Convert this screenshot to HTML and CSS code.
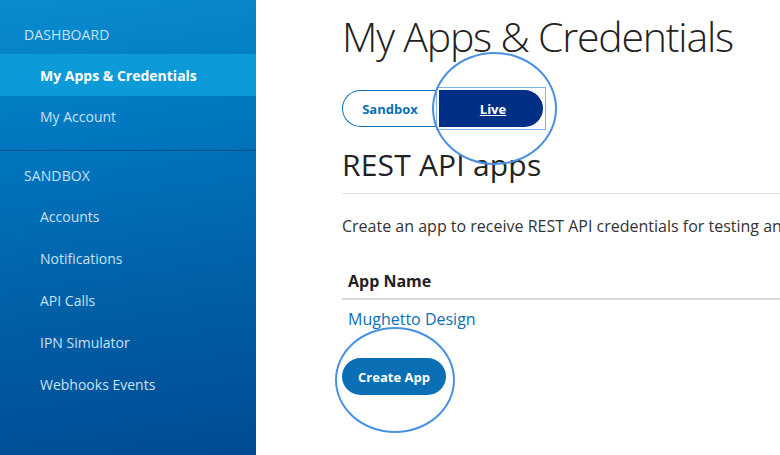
FILE: index.html
```html
<!DOCTYPE html>
<html>
<head>
<meta charset="utf-8">
<link rel="stylesheet" href="styles.css">
</head>
<body>
<aside class="sidebar">
  <div class="group">
    <div class="label">DASHBOARD</div>
    <a class="item active">My Apps &amp; Credentials</a>
    <a class="item">My Account</a>
  </div>
  <div class="group">
    <div class="label label-second">SANDBOX</div>
    <a class="item">Accounts</a>
    <a class="item">Notifications</a>
    <a class="item">API Calls</a>
    <a class="item">IPN Simulator</a>
    <a class="item">Webhooks Events</a>
  </div>
</aside>
<main class="main">
  <h1 class="title">My Apps &amp; Credentials</h1>
  <div class="toggle">
    <button class="tog tog-sandbox">Sandbox</button>
    <span class="focus-wrap"><button class="tog tog-live">Live</button></span>
    <span class="ring ring-live"></span>
  </div>
  <h2 class="subtitle">REST API apps</h2>
  <p class="desc">Create an app to receive REST API credentials for testing and live transactions.</p>
  <div class="table">
    <div class="th">App Name</div>
    <div class="td"><a class="app-link">Mughetto Design</a></div>
  </div>
  <div class="create">
    <button class="btn-create">Create App</button>
    <span class="ring ring-create"></span>
  </div>
</main>
</body>
</html>
```
FILE: styles.css
```css
html, body {
  margin: 0;
  height: 455px;
  overflow: hidden;
}
body {
  display: flex;
  font-family: "Open Sans", "Liberation Sans", sans-serif;
  background: #fff;
}
.sidebar {
  width: 256px;
  flex: 0 0 256px;
  height: 455px;
  background: linear-gradient(172deg, #0a8ccf 0%, #0077bf 30%, #0062aa 60%, #004b93 100%);
}
.group:first-child {
  border-bottom: 1px solid rgba(0, 30, 80, 0.45);
  padding-bottom: 12px;
}
.label {
  color: #c7e2f5;
  font-size: 14px;
  line-height: 20px;
  padding: 25px 24px 0;
  margin-bottom: 9px;
  letter-spacing: 0.1px;
}
.label-second {
  padding-top: 15px;
  margin-bottom: 10px;
}
.item {
  display: block;
  height: 42px;
  line-height: 42px;
  padding-left: 40px;
  color: #c7e2f5;
  font-size: 14px;
}
.item.active {
  background: #0d9ad8;
  color: #fff;
  font-weight: 700;
  line-height: 44px;
}
.main {
  flex: 1;
  padding-left: 86px;
  min-width: 0;
  overflow: hidden;
}
.title {
  margin: 12px 0 0;
  font-size: 41px;
  font-weight: 300;
  line-height: 48px;
  color: #222;
  white-space: nowrap;
  letter-spacing: -1.2px;
}
.toggle {
  position: relative;
  display: flex;
  align-items: center;
  margin-top: 30px;
  height: 37px;
}
.tog {
  font-family: "Open Sans", "Liberation Sans", sans-serif;
  font-weight: 700;
  font-size: 13px;
  height: 37px;
  cursor: pointer;
}
.tog-sandbox {
  width: 95px;
  background: #fff;
  color: #0a6fb4;
  border: 1px solid #0a6fb4;
  border-radius: 19px 0 0 19px;
  border-right: none;
}
.focus-wrap {
  display: inline-flex;
  padding: 2px;
  border: 1px solid #7fb4ee;
  margin-left: -1px;
}
.tog-live {
  width: 104px;
  background: #012f86;
  color: #fff;
  border: none;
  border-radius: 0 19px 19px 0;
  text-decoration: underline;
  padding-left: 10px;
}
.ring {
  position: absolute;
  border: 2px solid #4a90e2;
  border-radius: 50%;
  pointer-events: none;
}
.ring-live {
  left: 90px;
  top: -38px;
  width: 121px;
  height: 109px;
}
.subtitle {
  margin: 20px 0 0;
  font-size: 30px;
  font-weight: 400;
  line-height: 36px;
  color: #222;
  padding-bottom: 10px;
  border-bottom: 1px solid #e2e2e2;
  letter-spacing: 0.2px;
}
.desc {
  margin: 21px 0 0;
  font-size: 16px;
  line-height: 22px;
  color: #333;
  white-space: nowrap;
}
.table {
  margin-top: 33px;
}
.th {
  font-weight: 700;
  font-size: 16px;
  color: #222;
  padding: 0 6px 6px;
  line-height: 22px;
  border-bottom: 2px solid #d8d8d8;
}
.td {
  padding: 8px 6px 0;
  line-height: 22px;
}
.app-link {
  color: #0a6fb4;
  font-size: 16px;
}
.create {
  position: relative;
  margin-top: 28px;
  height: 37px;
}
.btn-create {
  width: 104px;
  height: 37px;
  border: none;
  border-radius: 19px;
  background: #0a6fb4;
  color: #fff;
  font-family: "Open Sans", "Liberation Sans", sans-serif;
  font-weight: 700;
  font-size: 13px;
}
.ring-create {
  left: -7px;
  top: -31px;
  width: 116px;
  height: 102px;
}
```
